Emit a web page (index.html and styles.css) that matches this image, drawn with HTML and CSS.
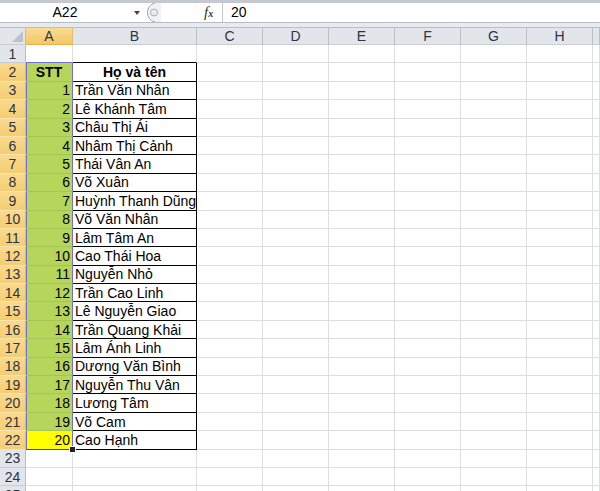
FILE: index.html
```html
<!DOCTYPE html>
<html lang="vi">
<head>
    <meta charset="UTF-8">
    <title>Danh sách</title>
    <link rel="stylesheet" href="styles.css">
</head>
<body>
    <div class="topline"></div>
    <div class="fbar">
        <div class="namebox">A22</div>
        <div class="dropdown"></div>
        <svg class="grip" width="18" height="19" viewBox="0 0 18 19">
            <path d="M12 0 C2 2 2 17 12 19 L18 19 L18 0 Z" fill="#f1f2f4"/>
            <path d="M12 0 C2 2 2 17 12 19" fill="none" stroke="#9aa1ab" stroke-width="1"/>
            <circle cx="11" cy="9.5" r="3.5" fill="#e9ebee" stroke="#a9afb8" stroke-width="1"/>
        </svg>
        <div class="fx"><i>f</i><span>x</span></div>
        <div class="formula">20</div>
    </div>
    <div class="band"></div>

    <div class="sheet">
        <div class="row hdr">
            <div class="rh corner"></div>
            <div class="ch active">A</div>
            <div class="ch">B</div>
            <div class="ch">C</div>
            <div class="ch">D</div>
            <div class="ch">E</div>
            <div class="ch">F</div>
            <div class="ch">G</div>
            <div class="ch">H</div>
            <div class="ch"></div>
        </div>

        <div class="row">
            <div class="rh">1</div>
            <div class="c sel-top"></div>
            <div class="c b-top"></div>
            <div class="c"></div><div class="c"></div><div class="c"></div><div class="c"></div><div class="c"></div><div class="c"></div><div class="c"></div>
        </div>
        <div class="row">
            <div class="rh on">2</div>
            <div class="c a bold center">STT</div>
            <div class="c b bold center">Họ và tên</div>
            <div class="c"></div><div class="c"></div><div class="c"></div><div class="c"></div><div class="c"></div><div class="c"></div><div class="c"></div>
        </div>
        <div class="row">
            <div class="rh on">3</div>
            <div class="c a num">1</div>
            <div class="c b">Trần Văn Nhân</div>
            <div class="c"></div><div class="c"></div><div class="c"></div><div class="c"></div><div class="c"></div><div class="c"></div><div class="c"></div>
        </div>
        <div class="row">
            <div class="rh on">4</div>
            <div class="c a num">2</div>
            <div class="c b">Lê Khánh Tâm</div>
            <div class="c"></div><div class="c"></div><div class="c"></div><div class="c"></div><div class="c"></div><div class="c"></div><div class="c"></div>
        </div>
        <div class="row">
            <div class="rh on">5</div>
            <div class="c a num">3</div>
            <div class="c b">Châu Thị Ái</div>
            <div class="c"></div><div class="c"></div><div class="c"></div><div class="c"></div><div class="c"></div><div class="c"></div><div class="c"></div>
        </div>
        <div class="row">
            <div class="rh on">6</div>
            <div class="c a num">4</div>
            <div class="c b">Nhâm Thị Cảnh</div>
            <div class="c"></div><div class="c"></div><div class="c"></div><div class="c"></div><div class="c"></div><div class="c"></div><div class="c"></div>
        </div>
        <div class="row">
            <div class="rh on">7</div>
            <div class="c a num">5</div>
            <div class="c b">Thái Vân An</div>
            <div class="c"></div><div class="c"></div><div class="c"></div><div class="c"></div><div class="c"></div><div class="c"></div><div class="c"></div>
        </div>
        <div class="row">
            <div class="rh on">8</div>
            <div class="c a num">6</div>
            <div class="c b">Võ Xuân</div>
            <div class="c"></div><div class="c"></div><div class="c"></div><div class="c"></div><div class="c"></div><div class="c"></div><div class="c"></div>
        </div>
        <div class="row">
            <div class="rh on">9</div>
            <div class="c a num">7</div>
            <div class="c b">Huỳnh Thanh Dũng</div>
            <div class="c"></div><div class="c"></div><div class="c"></div><div class="c"></div><div class="c"></div><div class="c"></div><div class="c"></div>
        </div>
        <div class="row">
            <div class="rh on">10</div>
            <div class="c a num">8</div>
            <div class="c b">Võ Văn Nhân</div>
            <div class="c"></div><div class="c"></div><div class="c"></div><div class="c"></div><div class="c"></div><div class="c"></div><div class="c"></div>
        </div>
        <div class="row">
            <div class="rh on">11</div>
            <div class="c a num">9</div>
            <div class="c b">Lâm Tâm An</div>
            <div class="c"></div><div class="c"></div><div class="c"></div><div class="c"></div><div class="c"></div><div class="c"></div><div class="c"></div>
        </div>
        <div class="row">
            <div class="rh on">12</div>
            <div class="c a num">10</div>
            <div class="c b">Cao Thái Hoa</div>
            <div class="c"></div><div class="c"></div><div class="c"></div><div class="c"></div><div class="c"></div><div class="c"></div><div class="c"></div>
        </div>
        <div class="row">
            <div class="rh on">13</div>
            <div class="c a num">11</div>
            <div class="c b">Nguyễn Nhỏ</div>
            <div class="c"></div><div class="c"></div><div class="c"></div><div class="c"></div><div class="c"></div><div class="c"></div><div class="c"></div>
        </div>
        <div class="row">
            <div class="rh on">14</div>
            <div class="c a num">12</div>
            <div class="c b">Trần Cao Linh</div>
            <div class="c"></div><div class="c"></div><div class="c"></div><div class="c"></div><div class="c"></div><div class="c"></div><div class="c"></div>
        </div>
        <div class="row">
            <div class="rh on">15</div>
            <div class="c a num">13</div>
            <div class="c b">Lê Nguyễn Giao</div>
            <div class="c"></div><div class="c"></div><div class="c"></div><div class="c"></div><div class="c"></div><div class="c"></div><div class="c"></div>
        </div>
        <div class="row">
            <div class="rh on">16</div>
            <div class="c a num">14</div>
            <div class="c b">Trần Quang Khải</div>
            <div class="c"></div><div class="c"></div><div class="c"></div><div class="c"></div><div class="c"></div><div class="c"></div><div class="c"></div>
        </div>
        <div class="row">
            <div class="rh on">17</div>
            <div class="c a num">15</div>
            <div class="c b">Lâm Ánh Linh</div>
            <div class="c"></div><div class="c"></div><div class="c"></div><div class="c"></div><div class="c"></div><div class="c"></div><div class="c"></div>
        </div>
        <div class="row">
            <div class="rh on">18</div>
            <div class="c a num">16</div>
            <div class="c b">Dương Văn Bình</div>
            <div class="c"></div><div class="c"></div><div class="c"></div><div class="c"></div><div class="c"></div><div class="c"></div><div class="c"></div>
        </div>
        <div class="row">
            <div class="rh on">19</div>
            <div class="c a num">17</div>
            <div class="c b">Nguyễn Thu Vân</div>
            <div class="c"></div><div class="c"></div><div class="c"></div><div class="c"></div><div class="c"></div><div class="c"></div><div class="c"></div>
        </div>
        <div class="row">
            <div class="rh on">20</div>
            <div class="c a num">18</div>
            <div class="c b">Lương Tâm</div>
            <div class="c"></div><div class="c"></div><div class="c"></div><div class="c"></div><div class="c"></div><div class="c"></div><div class="c"></div>
        </div>
        <div class="row">
            <div class="rh on">21</div>
            <div class="c a num">19</div>
            <div class="c b">Võ Cam</div>
            <div class="c"></div><div class="c"></div><div class="c"></div><div class="c"></div><div class="c"></div><div class="c"></div><div class="c"></div>
        </div>
        <div class="row">
            <div class="rh on">22</div>
            <div class="c a num current">20<span class="handle"></span></div>
            <div class="c b">Cao Hạnh</div>
            <div class="c"></div><div class="c"></div><div class="c"></div><div class="c"></div><div class="c"></div><div class="c"></div><div class="c"></div>
        </div>
        <div class="row">
            <div class="rh">23</div>
            <div class="c"></div><div class="c"></div>
            <div class="c"></div><div class="c"></div><div class="c"></div><div class="c"></div><div class="c"></div><div class="c"></div><div class="c"></div>
        </div>
        <div class="row">
            <div class="rh">24</div>
            <div class="c"></div><div class="c"></div>
            <div class="c"></div><div class="c"></div><div class="c"></div><div class="c"></div><div class="c"></div><div class="c"></div><div class="c"></div>
        </div>
        <div class="row">
            <div class="rh">25</div>
            <div class="c"></div><div class="c"></div>
            <div class="c"></div><div class="c"></div><div class="c"></div><div class="c"></div><div class="c"></div><div class="c"></div><div class="c"></div>
        </div>
    </div>
</body>
</html>
```
FILE: styles.css
```css
body {
    margin: 0;
    width: 600px;
    height: 491px;
    overflow: hidden;
    background-color: #fff;
    font-family: "Liberation Sans", Arial, sans-serif;
    color: #000;
}

/* formula bar */
.topline {
    height: 3px;
    background-color: #c4c9d0;
}
.fbar {
    display: flex;
    align-items: center;
    height: 19px;
    background-color: #fff;
    border-bottom: 1px solid #b6bdc6;
    font-size: 14px;
}
.namebox {
    width: 130px;
    text-align: center;
    line-height: 19px;
}
.dropdown {
    width: 0;
    height: 0;
    margin-left: 4px;
    border-left: 3px solid transparent;
    border-right: 3px solid transparent;
    border-top: 4px solid #444;
}
.grip {
    margin-left: 3px;
    display: block;
}
.fx {
    margin-left: 43px;
    width: 16px;
    font-family: "Liberation Serif", serif;
    font-size: 15px;
    color: #333;
}
.fx span {
    font-size: 10px;
    font-style: italic;
    font-weight: bold;
}
.formula {
    align-self: stretch;
    margin-left: 2px;
    padding-left: 8px;
    line-height: 19px;
    border-left: 1px solid #c2c7ce;
    flex: 1;
}
.band {
    height: 4px;
    background-color: #e7eaee;
}

/* grid */
.row {
    display: grid;
    grid-template-columns: 26px 47px 124px repeat(6, 66px) 1fr;
    height: 18.4px;
}
.row.hdr {
    height: 18px;
}
.rh,
.ch {
    box-sizing: border-box;
    display: flex;
    align-items: center;
    justify-content: center;
    font-size: 14px;
    color: #2c3445;
    background-color: #e2e6eb;
    border-right: 1px solid #b9bfc7;
    border-bottom: 1px solid #c9ced5;
}
.ch {
    border-top: 1px solid #b9bfc7;
}
.corner {
    position: relative;
    border-top: 1px solid #b9bfc7;
}
.corner::after {
    content: "";
    position: absolute;
    right: 2px;
    bottom: 2px;
    border-left: 11px solid transparent;
    border-bottom: 11px solid #bcc2ca;
}
.ch.active {
    background: linear-gradient(#f9dc92, #f3c767);
    border-bottom: 1px solid #eeb24a;
    border-right-color: #e2bd6e;
}
.rh.on {
    background: linear-gradient(#f9da8e, #f5cd72);
    border-bottom-color: #fbe4b0;
    border-right-color: #e8b75a;
}

.c {
    box-sizing: border-box;
    position: relative;
    display: flex;
    align-items: center;
    padding: 0 2px;
    font-size: 14px;
    white-space: nowrap;
    border-right: 1px solid #dcdee1;
    border-bottom: 1px solid #dcdee1;
}
.sel-top {
    border-bottom-color: #6f6fd6;
}
.b-top {
    border-bottom-color: #000;
}
.a {
    background-color: #b5d65b;
    border-right: 1px solid #6f6fd6;
    border-bottom-color: #a4c458;
    box-shadow: inset 1px 0 0 #6f6fd6;
}
.b {
    border-right-color: #000;
    border-bottom-color: #000;
}
.bold {
    font-weight: bold;
}
.center {
    justify-content: center;
}
.num {
    justify-content: flex-end;
}
.a.current {
    background-color: #ffff00;
    border-bottom: 1px solid #3a3adb;
}
.handle {
    position: absolute;
    right: -4px;
    bottom: -4px;
    width: 5px;
    height: 5px;
    background-color: #222;
    border: 1px solid #fff;
    z-index: 2;
}
```
